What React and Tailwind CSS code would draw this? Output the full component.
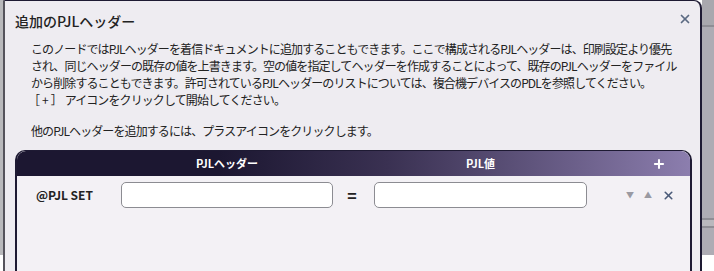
import { X, Plus } from "lucide-react";

const font = { fontFamily: '"Noto Sans CJK JP", "Noto Sans", sans-serif' };

const lines = [
  "このノードではPJLヘッダーを着信ドキュメントに追加することもできます。ここで構成されるPJLヘッダーは、印刷設定より優先",
  "され、同じヘッダーの既存の値を上書きます。空の値を指定してヘッダーを作成することによって、既存のPJLヘッダーをファイル",
  "から削除することもできます。許可されているPJLヘッダーのリストについては、複合機デバイスのPDLを参照してください。",
];

const HeaderRow = () => (
  <div className="flex h-[25px] items-center rounded-t-[9px] bg-linear-to-r from-[#1c1731] from-30% via-[#3a3152] via-55% to-[#8c7eae] text-[11px] font-bold text-white">
    <div className="w-[104px]" />
    <div className="w-[212px] text-center">PJLヘッダー</div>
    <div className="w-[41px]" />
    <div className="w-[213px] text-center">PJL値</div>
    <div className="flex flex-1 justify-end pr-[24px]">
      <Plus size={14} strokeWidth={3.5} />
    </div>
  </div>
);

const EntryRow = () => (
  <div className="flex h-[38px] items-center">
    <div className="w-[104px] pl-[19px] text-[12px] font-bold text-[#222]">@PJL SET</div>
    <input className="h-[26px] w-[212px] rounded-[5px] border border-[#8c8c92] bg-white px-2 text-[12px] outline-none" />
    <div className="w-[38px] text-center text-[16px] font-bold text-[#222]">=</div>
    <div className="w-[3px]" />
    <input className="h-[26px] w-[213px] rounded-[5px] border border-[#8c8c92] bg-white px-2 text-[12px] outline-none" />
    <div className="flex flex-1 items-center gap-[10px] pl-[39px]">
      <span className="text-[8px] text-[#9a9aa2]">▼</span>
      <span className="text-[8px] text-[#9a9aa2]">▲</span>
      <X size={13} strokeWidth={3} className="text-[#4a5a78]" />
    </div>
  </div>
);

export default function App() {
  return (
    <div className="flex h-[271px] w-[714px] overflow-hidden bg-white" style={font}>
      <div className="flex w-[3px] flex-col">
        <div className="h-[255px] bg-[#b9b9bc]" />
      </div>
      <div className="flex w-[699px] flex-col rounded-tr-[8px] border-x-2 border-t border-l-[#55535c] border-r-[#1e1a33] border-t-[#1e1a33] bg-[#eeecf1]">
        <div className="flex items-center justify-between pl-[10px] pr-[8px] pt-[11px]">
          <h1 className="text-[14px] font-medium leading-[18px] text-[#222]">追加のPJLヘッダー</h1>
          <X size={14} strokeWidth={3} className="-mt-[4px] text-[#5b6a82]" />
        </div>
        <div className="mt-[10px] pl-[26px] text-[12px] leading-[17px] tracking-[-0.9px] text-[#222]">
          {lines.map((l) => (
            <div key={l} className="whitespace-nowrap">{l}</div>
          ))}
          <div className="-ml-[3px] whitespace-nowrap">
            <span className="tracking-[2px]">［+］</span>アイコンをクリックして開始してください。
          </div>
          <div className="mt-[14px] whitespace-nowrap">他のPJLヘッダーを追加するには、プラスアイコンをクリックします。</div>
        </div>
        <div className="ml-[10px] mt-[11px] flex w-[677px] flex-1 flex-col rounded-t-[10px] border-x-2 border-t border-[#1e1a33] bg-[#f3f1f5]">
          <HeaderRow />
          <EntryRow />
        </div>
      </div>
      <div className="flex w-[12px] flex-col">
        <div className="h-[25px] bg-[#a9a8ae]" />
        <div className="h-[2px] bg-[#8f8e95]" />
        <div className="h-[191px] bg-[#aeacb4]" />
        <div className="h-[2px] bg-[#8f8e95]" />
        <div className="h-[6px] bg-[#b9b8bd]" />
        <div className="h-[2px] bg-[#8f8e95]" />
        <div className="h-[27px] bg-[#aeacb4]" />
      </div>
    </div>
  );
}
